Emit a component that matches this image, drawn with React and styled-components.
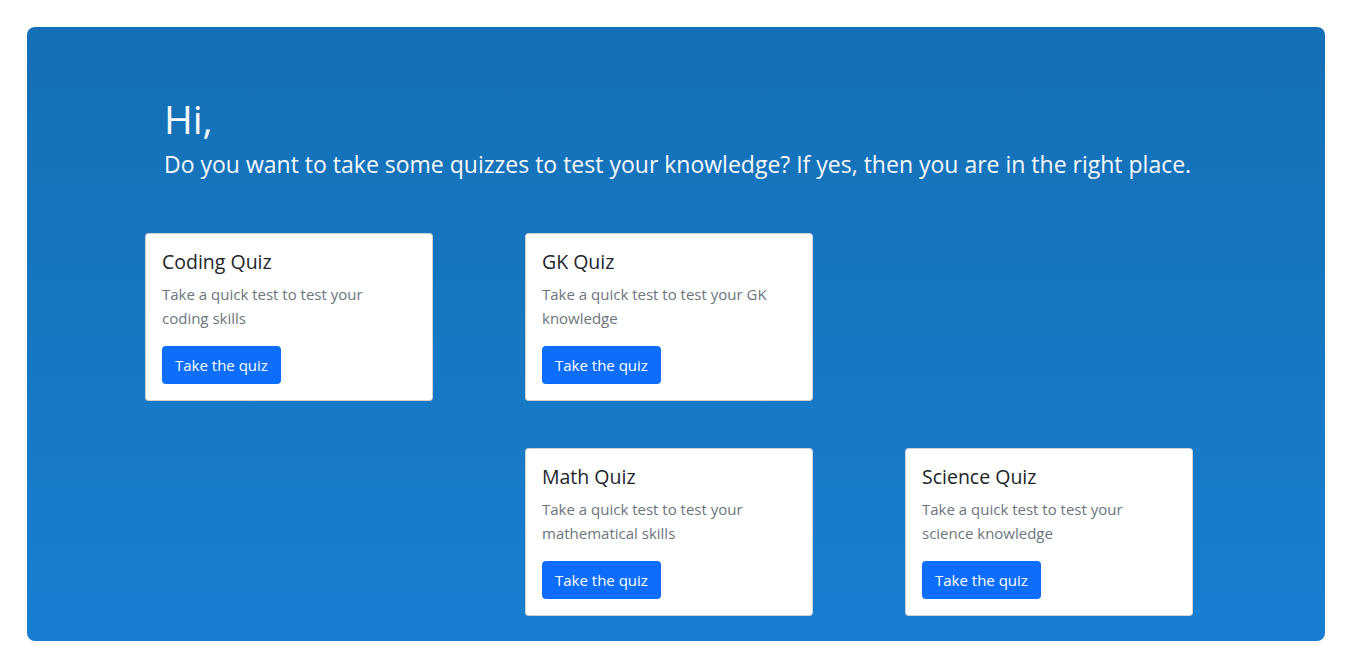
import React from 'react';
import styled, { createGlobalStyle } from 'styled-components';

const GlobalStyle = createGlobalStyle`
  body {
    margin: 0;
    background: #fff;
    font-family: "Open Sans", "Noto Sans", sans-serif;
  }
`;

const Page = styled.div`
  padding: 27px 41px 26px 27px;
`;

const Panel = styled.section`
  background: linear-gradient(180deg, #1470b5 0%, #177fd1 100%);
  border-radius: 8px;
  padding: 68px 0 25px 118px;
  height: 614px;
  box-sizing: border-box;
`;

const Greeting = styled.h1`
  margin: 0 0 0 19px;
  font-size: 39px;
  font-weight: 400;
  line-height: 48px;
  color: #f8f9fa;
`;

const Lead = styled.p`
  margin: 6px 0 0 19px;
  font-size: 23px;
  line-height: 30px;
  color: #f8f9fa;
`;

const Grid = styled.div`
  display: grid;
  grid-template-columns: repeat(3, 288px);
  column-gap: 92px;
  row-gap: 47px;
  margin-top: 54px;
`;

const Card = styled.div`
  grid-column: ${(p) => p.col};
  grid-row: ${(p) => p.row};
  background: #fff;
  border: 1px solid rgba(0, 0, 0, 0.175);
  border-radius: 4px;
  padding: 16px;
`;

const Title = styled.h5`
  margin: 0 0 8px;
  font-size: 19.5px;
  font-weight: 400;
  line-height: 24px;
  color: #212529;
`;

const Text = styled.p`
  margin: 0 0 16px;
  font-size: 15px;
  line-height: 24px;
  color: #6c757d;
  max-width: 236px;
`;

const Button = styled.button`
  display: inline-block;
  height: 38px;
  padding: 0 13px;
  border: 0;
  border-radius: 4px;
  background: #0d6efd;
  color: #fff;
  font-family: inherit;
  font-size: 15px;
  cursor: pointer;
`;

const quizzes = [
  { title: 'Coding Quiz', text: 'Take a quick test to test your coding skills', col: 1, row: 1 },
  { title: 'GK Quiz', text: 'Take a quick test to test your GK knowledge', col: 2, row: 1 },
  { title: 'Math Quiz', text: 'Take a quick test to test your mathematical skills', col: 2, row: 2 },
  { title: 'Science Quiz', text: 'Take a quick test to test your science knowledge', col: 3, row: 2 },
];

const App = () => (
  <Page>
    <GlobalStyle />
    <Panel>
      <Greeting>Hi,</Greeting>
      <Lead>
        Do you want to take some quizzes to test your knowledge? If yes, then you are in the right place.
      </Lead>
      <Grid>
        {quizzes.map((q) => (
          <Card key={q.title} col={q.col} row={q.row}>
            <Title>{q.title}</Title>
            <Text>{q.text}</Text>
            <Button type="button">Take the quiz</Button>
          </Card>
        ))}
      </Grid>
    </Panel>
  </Page>
);

export default App;
